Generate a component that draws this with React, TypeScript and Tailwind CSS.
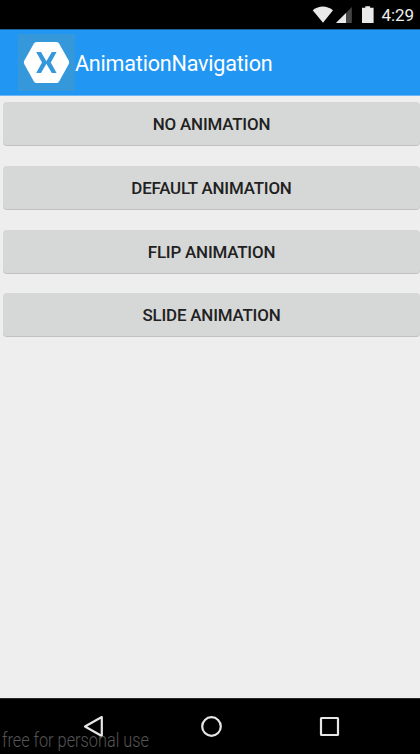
import React from "react";

const actions = [
  { label: "NO ANIMATION", height: "h-[64px]" },
  { label: "DEFAULT ANIMATION", height: "h-[63.8px]" },
  { label: "FLIP ANIMATION", height: "h-[63.6px]" },
  { label: "SLIDE ANIMATION", height: "h-[63.6px]" },
];

function StatusBar() {
  return (
    <header className="flex h-[29px] shrink-0 items-start bg-black pl-[312px] text-[#eeeeee]">
      <svg className="mt-[5px] h-[19px] w-[66px] shrink-0" viewBox="312 5 66 19" fill="#e9e9e9">
        <path d="M312.7 10.2Q322.8 2.7 333 10.2L323 22.8Z" />
        <path d="M351.8 7V23H336Z" fill="#464646" />
        <path d="M346 12.9V23H336Z" />
        <path d="M365.3 6.2h4.8v1.6h3.5V23h-11.6V7.8h3.3Z" />
      </svg>
      <span className="ml-[3.5px] mt-[4px] text-[17px] leading-[23px] tracking-[-0.1px]">4:29</span>
    </header>
  );
}

function AppBar() {
  return (
    <div className="flex h-[67px] shrink-0 items-start border-b border-t border-b-[#6bb7f5] border-t-[#17639f] bg-[#2196f3] pl-[18px] pt-[4px] text-white">
      <svg className="h-[57px] w-[57px] shrink-0" viewBox="0 0 57 57">
        <rect width="57" height="57" fill="#3498db" />
        <path
          d="M18.5 7.9H38.5Q40.2 7.9 41.1 9.4L50.8 26.8Q51.6 28.4 50.8 29.9L41.1 47.4Q40.2 48.9 38.5 48.9H18.5Q16.8 48.9 15.9 47.4L6.2 29.9Q5.4 28.4 6.2 26.8L15.9 9.4Q16.8 7.9 18.5 7.9Z"
          fill="white"
        />
        <path
          d="M18.2 18H23L28.4 27.3L33.8 18H38.6L32.8 28.5L38.6 39H33.8L28.4 29.7L23 39H18.2L24 28.5Z"
          fill="#3498db"
        />
      </svg>
      <h1 className="mt-[16px] text-[21.6px] font-normal leading-[28px] tracking-[-0.22px]">AnimationNavigation</h1>
    </div>
  );
}

function NavigationBar() {
  return (
    <footer className="relative h-[56px] shrink-0 border-t border-[#292929] bg-black">
      <div className="flex h-full pl-[82px]">
        <svg className="mt-[16px] h-[24px] w-[260px]" viewBox="82 715 260 24" fill="none" stroke="#e6e6e6" strokeWidth="2.2" strokeLinejoin="round">
          <path d="M101.8 717L85 726.5L101.8 736Z" />
          <circle cx="211.5" cy="726.5" r="9.3" />
          <rect x="321" y="718" width="17" height="17" rx=".5" />
        </svg>
      </div>
      <span className="absolute left-[2.2px] top-[30px] origin-left scale-x-[0.832] whitespace-nowrap text-[19.6px] font-light leading-[24px] text-[#555555]">
        free for personal use
      </span>
    </footer>
  );
}

export default function App() {
  return (
    <div className="flex h-[754px] w-[420px] flex-col overflow-hidden bg-[#eeeeee] font-['Roboto',sans-serif]">
      <StatusBar />
      <AppBar />
      <main className="flex-1 pl-[3px] pt-[6px]">
        {actions.map(({ label, height }) => (
          <div key={label} className={height}>
            <button className="block h-[43px] w-full rounded-[4px] bg-[#d6d8d7] text-center text-[16.9px] font-medium leading-[44px] tracking-[-0.18px] text-[#212121] shadow-[0_1px_0_#c0c2c1]">
              {label}
            </button>
          </div>
        ))}
      </main>
      <NavigationBar />
    </div>
  );
}
